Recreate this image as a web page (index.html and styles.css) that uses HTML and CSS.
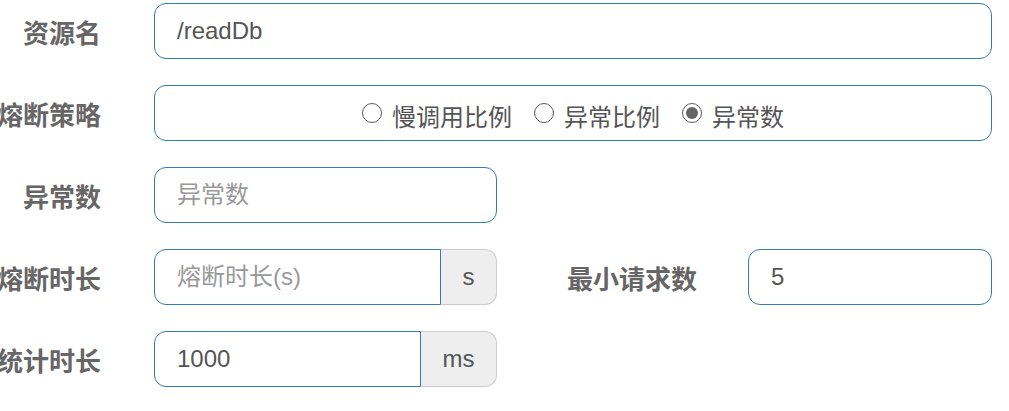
FILE: index.html
```html
<!DOCTYPE html>
<html lang="zh-CN">
<head>
<meta charset="utf-8">
<title>熔断规则</title>
<link rel="stylesheet" href="styles.css">
</head>
<body>
<form class="form">
  <div class="row">
    <label class="label">资源名</label>
    <input class="control wide" type="text" value="/readDb">
  </div>
  <div class="row">
    <label class="label">熔断策略</label>
    <div class="control wide radios">
      <span class="radio"><span class="dot"></span><span class="radio-text">慢调用比例</span></span>
      <span class="radio"><span class="dot"></span><span class="radio-text">异常比例</span></span>
      <span class="radio"><span class="dot checked"></span><span class="radio-text">异常数</span></span>
    </div>
  </div>
  <div class="row">
    <label class="label">异常数</label>
    <input class="control narrow" type="text" placeholder="异常数">
  </div>
  <div class="row">
    <label class="label">熔断时长</label>
    <div class="group">
      <input class="control grouped" type="text" placeholder="熔断时长(s)">
      <span class="addon">s</span>
    </div>
    <label class="label label-right">最小请求数</label>
    <input class="control small" type="text" value="5">
  </div>
  <div class="row">
    <label class="label">统计时长</label>
    <div class="group">
      <input class="control grouped" type="text" value="1000">
      <span class="addon">ms</span>
    </div>
  </div>
</form>
</body>
</html>
```

FILE: styles.css
```css
* {
  box-sizing: border-box;
}

body {
  margin: 0;
  background: #ffffff;
  font-family: "Liberation Sans", "Noto Sans CJK SC", sans-serif;
  color: #555555;
}

.form {
  padding-top: 3px;
}

.row {
  display: flex;
  align-items: center;
  height: 56px;
  margin-bottom: 26px;
}

.label {
  flex: none;
  width: 101px;
  margin-right: 53px;
  margin-top: 1px;
  display: flex;
  justify-content: flex-end;
  white-space: nowrap;
  font-family: "Noto Sans CJK SC", sans-serif;
  font-weight: bold;
  font-size: 26px;
  color: #666666;
}

.label-right {
  width: 200px;
  margin-right: 51px;
}

.control {
  flex: none;
  height: 56px;
  border: 1px solid #337ab7;
  border-radius: 12px;
  padding: 0 22px;
  font-family: "Liberation Sans", "Noto Sans CJK SC", sans-serif;
  font-size: 24px;
  color: #555555;
  background: #ffffff;
  outline: none;
}

.control::placeholder {
  color: #999999;
}

.wide {
  width: 838px;
}

.narrow {
  width: 343px;
}

.small {
  width: 244px;
}

.radios {
  display: flex;
  align-items: center;
  justify-content: center;
  gap: 22px;
}

.radio {
  display: flex;
  align-items: center;
  gap: 10px;
}

.radio-text {
  margin-top: 4px;
}

.dot {
  width: 20px;
  height: 20px;
  border: 1.5px solid #5a5a5a;
  border-radius: 50%;
  display: flex;
  align-items: center;
  justify-content: center;
}

.dot.checked::after {
  content: "";
  width: 12px;
  height: 12px;
  border-radius: 50%;
  background: #666666;
}

.group {
  flex: none;
  width: 343px;
  height: 56px;
  display: flex;
}

.grouped {
  flex: 1;
  min-width: 0;
  width: auto;
  border-radius: 12px 0 0 12px;
}

.addon {
  flex: none;
  display: flex;
  align-items: center;
  justify-content: center;
  padding: 0 21.5px;
  background: #eeeeee;
  border: 1px solid #cccccc;
  border-left: 0;
  border-radius: 0 12px 12px 0;
  font-size: 24px;
  color: #555555;
}
```
